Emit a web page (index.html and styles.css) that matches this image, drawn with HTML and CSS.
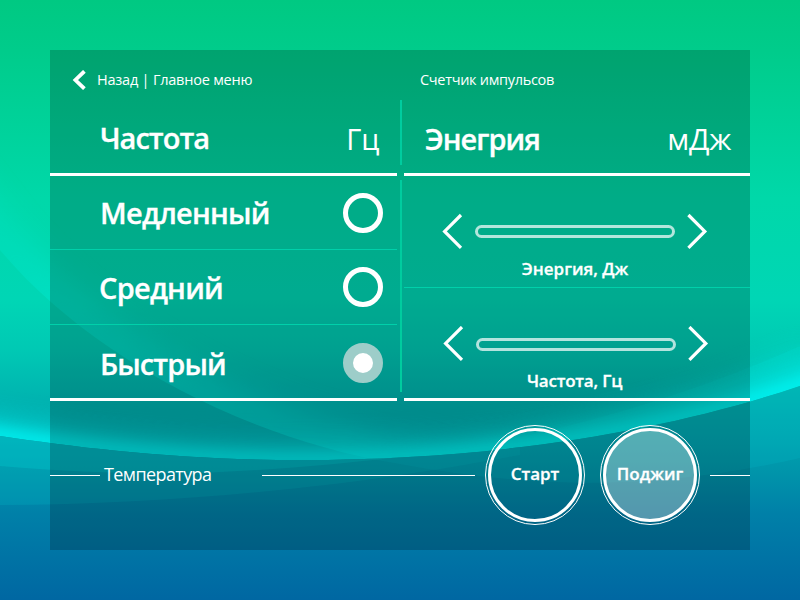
FILE: index.html
```html
<!DOCTYPE html>
<html lang="ru">
<head>
<meta charset="utf-8">
<title>Частота и энергия</title>
<link rel="stylesheet" href="styles.css">
</head>
<body>
<svg class="backdrop" viewBox="0 0 800 600" aria-hidden="true">
  <defs>
    <linearGradient id="sky" gradientUnits="userSpaceOnUse" x1="0" y1="0" x2="0" y2="460">
      <stop offset="0" stop-color="#00c982"/>
      <stop offset=".11" stop-color="#00cc8b"/>
      <stop offset=".43" stop-color="#00d8a9"/>
      <stop offset=".65" stop-color="#00d6b5"/>
      <stop offset=".76" stop-color="#00c9b4"/>
      <stop offset=".87" stop-color="#00b3b0"/>
      <stop offset="1" stop-color="#00a2ac"/>
    </linearGradient>
    <linearGradient id="sea" gradientUnits="userSpaceOnUse" x1="0" y1="385" x2="0" y2="600">
      <stop offset="0" stop-color="#00b4b0"/>
      <stop offset=".25" stop-color="#00a3ae"/>
      <stop offset=".42" stop-color="#0093aa"/>
      <stop offset=".6" stop-color="#0080a8"/>
      <stop offset="1" stop-color="#0067a2"/>
    </linearGradient>
    <linearGradient id="sheen" gradientUnits="userSpaceOnUse" x1="0" y1="0" x2="450" y2="0">
      <stop offset="0" stop-color="#00f0dc" stop-opacity=".2"/>
      <stop offset=".15" stop-color="#00f0dc" stop-opacity=".36"/>
      <stop offset=".8" stop-color="#00e4dc" stop-opacity=".42"/>
      <stop offset="1" stop-color="#00e4dc" stop-opacity=".1"/>
    </linearGradient>
    <clipPath id="aboveMain"><path d="M0 0H800V386C670 430 500 460 300 460C180 460 80 448 0 436Z"/></clipPath>
    <clipPath id="aboveLong"><path d="M0 250C80 346 230 436 400 464C540 490 660 490 800 458V0H0Z"/></clipPath>
    <clipPath id="belowMain"><path d="M0 436C80 448 180 460 300 460C500 460 670 430 800 386V600H0Z"/></clipPath>
    <filter id="soft" filterUnits="userSpaceOnUse" x="-100" y="0" width="1000" height="700"><feGaussianBlur stdDeviation="14"/></filter>
    <filter id="tight" filterUnits="userSpaceOnUse" x="-100" y="0" width="1000" height="700"><feGaussianBlur stdDeviation="7"/></filter>
  </defs>
  <rect width="800" height="600" fill="url(#sky)"/>
  <g clip-path="url(#aboveLong)">
    <path class="glow-long" filter="url(#soft)" d="M-60 170L0 250C80 346 230 436 400 464C540 490 660 490 800 458"/>
  </g>
  <g clip-path="url(#aboveMain)">
    <path class="glow-cross" filter="url(#soft)" d="M400 458C540 440 680 400 800 346L860 380L400 500Z"/>
    <path class="glow-wide" filter="url(#soft)" d="M-60 427L0 436C80 448 180 460 300 460C500 460 670 430 800 386L860 364"/>
    <path class="glow-edge" filter="url(#tight)" d="M-60 427L0 436C80 448 180 460 300 460C500 460 670 430 800 386L860 364"/>
    <path class="veil" d="M400 458C540 440 680 400 800 346V460Z"/>
  </g>
  <g clip-path="url(#belowMain)">
    <rect width="800" height="600" fill="url(#sea)"/>
    <path class="band-long" d="M0 250C80 346 230 436 400 464C540 490 660 490 800 458V300H0Z"/>
    <path class="band-upper" d="M0 466C70 472 130 474 200 473C270 470 330 465 400 457V400H0Z"/>
    <path class="band-lower" d="M0 505C150 505 300 490 400 475C450 468 480 462 520 455V380H0Z"/>
  </g>
</svg>

<main class="panel">
  <header class="topbar">
    <a class="back">
      <svg class="back-icon" viewBox="0 0 14 20"><path d="M12.4 1.3L3.4 10L12.4 18.7"/></svg>
      <span>Назад | Главное меню</span>
    </a>
    <span class="counter">Счетчик импульсов</span>
  </header>

  <div class="columns">
    <section>
      <div class="head head-left"><h2>Частота</h2><span class="unit">Гц</span></div>
      <ul class="modes">
        <li class="mode mode-slow"><span>Медленный</span><i class="radio"></i></li>
        <li class="mode mode-mid"><span>Средний</span><i class="radio"></i></li>
        <li class="mode mode-fast"><span>Быстрый</span><i class="radio radio-on"></i></li>
      </ul>
    </section>
    <div class="divider"><i class="divider-top"></i><i class="divider-bottom"></i></div>
    <section>
      <div class="head head-right"><h2>Энегрия</h2><span class="unit unit-wide">мДж</span></div>
      <div class="control control-energy">
        <div class="stepper">
          <svg class="chevron" viewBox="0 0 21 36"><path d="M19 2L2.6 18.4L19 34.8"/></svg>
          <div class="track"></div>
          <svg class="chevron" viewBox="0 0 21 36"><path d="M1.4 2L17.8 18.4L1.4 34.8"/></svg>
        </div>
        <p class="caption caption-energy">Энергия, Дж</p>
      </div>
      <div class="control control-rate">
        <div class="stepper">
          <svg class="chevron" viewBox="0 0 21 36"><path d="M19 1L2.6 17.4L19 33.8"/></svg>
          <div class="track"></div>
          <svg class="chevron" viewBox="0 0 21 36"><path d="M1.4 1L17.8 17.4L1.4 33.8"/></svg>
        </div>
        <p class="caption caption-rate">Частота, Гц</p>
      </div>
    </section>
  </div>

  <footer class="actions">
    <i class="line line-start"></i>
    <span class="temperature">Температура</span>
    <i class="line line-middle"></i>
    <button class="round"><span class="round-face">Старт</span></button>
    <button class="round round-fire"><span class="round-face">Поджиг</span></button>
    <i class="line line-end"></i>
  </footer>
</main>
</body>
</html>
```

FILE: styles.css
```css
* { box-sizing: border-box; margin: 0; padding: 0; }
body {
  width: 800px;
  height: 600px;
  padding: 50px;
  overflow: hidden;
  background: #00c985;
  color: #fff;
  font-family: "Open Sans", "Noto Sans", sans-serif;
}
i { display: block; font-style: normal; }

.backdrop { position: absolute; left: 0; top: 0; width: 800px; height: 600px; }
.glow-long { fill: none; stroke: url(#sheen); stroke-width: 56; }
.glow-cross { fill: #00e8dc; opacity: .35; }
.glow-wide { fill: none; stroke: #00f0ee; stroke-width: 30; opacity: .7; }
.glow-edge { fill: none; stroke: #00ffff; stroke-width: 14; opacity: .65; }
.veil { fill: #00f0e8; opacity: .12; }
.band-long { fill: #00c8d8; opacity: .15; }
.band-upper { fill: #00d4d8; opacity: .3; }
.band-lower { fill: #00c0c8; opacity: .22; }

.panel {
  position: relative;
  width: 700px;
  height: 500px;
  background: rgba(0, 0, 0, .2);
}

.topbar { display: flex; align-items: center; height: 50px; padding: 9px 0 0 22px; font-size: 14.5px; line-height: 20px; }
.back { display: flex; align-items: center; gap: 11px; width: 348px; letter-spacing: -.22px; }
.back-icon { width: 14px; height: 20px; fill: none; stroke: #fff; stroke-width: 3.8; }
.counter { letter-spacing: -.3px; }

.columns { display: grid; grid-template-columns: 347px 7px 346px; height: 301px; }
.head {
  display: flex;
  justify-content: space-between;
  height: 76px;
  border-bottom: 3px solid #fff;
  line-height: 40px;
}
.head-left { padding: 19px 18px 0 50px; }
.head-right { padding: 19px 19px 0 21px; }
h2 { font-size: 29px; font-weight: 600; line-height: 40px; letter-spacing: -1px; }
h2, .mode, .caption, .round { -webkit-text-stroke: .3px #fff; }
.head-left h2 { margin-top: -1px; }
.unit { font-size: 29px; font-weight: 400; letter-spacing: -.3px; }
.unit-wide { font-size: 30px; }

.divider { padding-left: 3px; }
.divider i { width: 2px; background: #00cc9f; }
.divider-top { height: 65px; }
.divider-bottom { height: 212px; margin-top: 15px; }

.modes { list-style: none; height: 225px; border-bottom: 3px solid #fff; }
.mode {
  display: flex;
  justify-content: space-between;
  align-items: flex-start;
  padding: 0 14px 0 50px;
  font-size: 29px;
  font-weight: 600;
  line-height: 40px;
  letter-spacing: -.75px;
}
.mode-slow { height: 74px; padding-top: 17px; border-bottom: 1px solid #00d0aa; }
.mode-mid { height: 75px; padding-top: 17px; padding-left: 49px; border-bottom: 1px solid #00d0aa; }
.mode-fast { height: 73px; padding-top: 18px; letter-spacing: -.9px; }
.mode-mid span, .mode-fast span { margin-top: 1px; }
.radio { width: 40px; height: 40px; border: 5px solid #fff; border-radius: 50%; }
.radio-on { border: 10px solid #9dcdc9; background: #fff; }

.control-energy { height: 112px; padding: 37px 0 0 38px; border-bottom: 1px solid #00d0aa; }
.control-rate { height: 113px; padding: 38px 0 0 39px; border-bottom: 3px solid #fff; }
.stepper { display: flex; align-items: center; gap: 12px; height: 36px; }
.chevron { width: 21px; height: 36px; fill: none; stroke: #fff; stroke-width: 3.2; }
.track { width: 200px; height: 13px; border: 3px solid rgba(255, 255, 255, .7); border-radius: 7px; }
.caption { width: 266px; font-size: 17px; font-weight: 600; line-height: 24px; text-align: center; }
.caption-energy { margin-top: 8px; }
.caption-rate { width: 263px; margin-top: 7px; letter-spacing: -.2px; }

.actions { display: flex; align-items: center; height: 149px; }
.line { height: 1px; background: #fff; }
.line-start { width: 50px; margin-right: 4px; }
.temperature { width: 158px; margin-top: -4px; font-size: 18px; line-height: 24px; letter-spacing: -.6px; }
.line-middle { width: 213px; margin-right: 10px; }
.line-end { flex: 1; margin-left: 10px; }
.round {
  display: grid;
  place-items: center;
  width: 100px;
  height: 100px;
  margin-top: -2px;
  border: 1px solid #fff;
  border-radius: 50%;
  background: none;
  color: #fff;
  font: 600 17px/24px "Open Sans", "Noto Sans", sans-serif;
}
.round-fire { margin-left: 15px; }
.round-face {
  display: grid;
  place-items: center;
  width: 94px;
  height: 94px;
  padding-bottom: 2px;
  border: 3px solid #fff;
  border-radius: 50%;
}
.round-fire .round-face { background: rgba(255, 255, 255, .33); }
```
